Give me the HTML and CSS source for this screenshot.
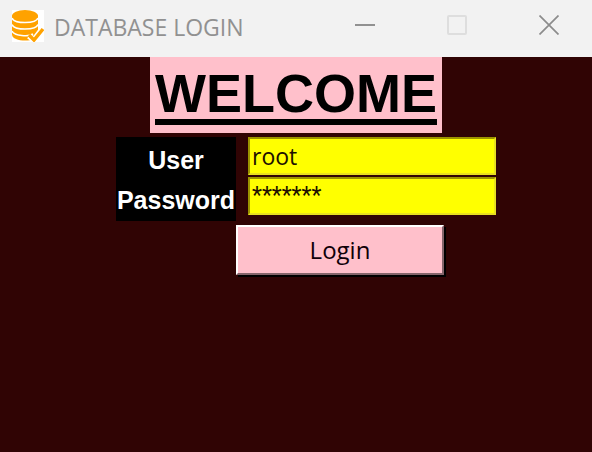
FILE: index.html
```html
<!DOCTYPE html>
<html lang="en">
<head>
<meta charset="utf-8">
<title>DATABASE LOGIN</title>
<link rel="stylesheet" href="styles.css">
</head>
<body>
<header class="titlebar">
  <svg class="app-icon" viewBox="0 0 32 32" aria-hidden="true">
    <rect width="32" height="32" fill="#fff"/>
    <path d="M0 5.500v19c0 8 26 8 26 0v-19z" fill="#ffa200"/>
    <ellipse cx="13" cy="6" rx="13" ry="6" fill="#ffa200"/>
    <path d="M0 8c2 6 24 6 26 0M0 14.500c2 6 24 6 26 0M0 21c2 5 17 6 21 3" fill="none" stroke="#fff" stroke-width="1.600"/>
    <path d="M17 26l5 4 9-12" fill="none" stroke="#fff" stroke-width="6"/>
    <path d="M17 25l5 5 9-11" fill="none" stroke="#ffa200" stroke-width="3.500"/>
  </svg>
  <span class="title">DATABASE LOGIN</span>
  <div class="controls">
    <button type="button" aria-label="Minimize"><svg viewBox="0 0 20 20"><path d="M0 10h20" stroke="#919191" stroke-width="2"/></svg></button>
    <button type="button" aria-label="Maximize" disabled><svg viewBox="0 0 20 20"><rect x="1" y="1" width="18" height="18" rx="1" fill="none" stroke="#dedede" stroke-width="2"/></svg></button>
    <button type="button" aria-label="Close"><svg viewBox="0 0 20 20"><path d="M0.5 0.5l19 19M19.5 0.5l-19 19" stroke="#8c8c8c" stroke-width="1.7"/></svg></button>
  </div>
</header>
<main>
  <h1>WELCOME</h1>
  <form>
    <div class="fields">
      <div class="labels">
        <label for="user">User</label>
        <label for="password">Password</label>
      </div>
      <div class="inputs">
        <input id="user" type="text" value="root">
        <input id="password" class="masked" type="text" value="*******" autocomplete="off">
      </div>
    </div>
    <button class="login" type="button">Login</button>
  </form>
</main>
</body>
</html>
```
FILE: styles.css
```css
* { box-sizing: border-box; }
body {
  margin: 0;
  min-height: 100vh;
  display: flex;
  flex-direction: column;
  background: #300404;
  font-family: "Open Sans", sans-serif;
}
.titlebar {
  display: flex;
  align-items: center;
  height: 57px;
  padding: 0 0 7px 12px;
  background: #f2f2f2;
}
.app-icon { width: 32px; height: 32px; margin-top: 2px; }
.title {
  margin-left: 10px;
  padding-top: 4px;
  font-size: 23px;
  line-height: 32px;
  color: #919191;
  white-space: nowrap;
}
.controls { display: flex; margin: 0 -3px 0 auto; }
.controls button {
  display: grid;
  place-items: center;
  width: 92px;
  height: 50px;
  padding: 0;
  border: 0;
  background: none;
}
.controls svg { width: 20px; height: 20px; }
body { overflow-x: hidden; }
main { display: flex; flex-direction: column; align-items: center; }
h1 {
  margin: 0;
  padding: 0 5px 4px;
  background: #ffc0cb;
  color: #000;
  font: bold 54px/72px "Liberation Sans", sans-serif;
  text-decoration: underline;
  text-decoration-thickness: 6px;
  text-underline-offset: 7px;
}
form { display: flex; flex-direction: column; align-items: center; padding-top: 4px; }
.fields { display: flex; gap: 12px; margin-left: 20px; }
.labels {
  display: flex;
  flex-direction: column;
  width: 120px;
  height: 84px;
  padding-top: 3px;
  background: #000;
  color: #fff;
  text-align: center;
  font: bold 25px/40px "Liberation Sans", sans-serif;
}
.inputs { display: flex; flex-direction: column; gap: 2px; width: 248px; }
input {
  width: 100%;
  height: 38px;
  padding: 0 2px;
  border: 2px solid;
  border-color: #9c9400 #e8e020 #e8e020 #9c9400;
  border-radius: 0;
  background: #ff0;
  color: #201000;
  font: 23px/32px "Open Sans", sans-serif;
}
.masked { padding-bottom: 2px; font-family: Roboto, sans-serif; }
.login {
  width: 208px;
  height: 50px;
  margin: 4px 0 0 88px;
  padding: 0;
  border: 2px solid;
  border-color: #fff #85656b #85656b #fff;
  border-radius: 0;
  box-shadow: 2px 2px 0 #000;
  background: #ffc0cb;
  color: #100008;
  font: 24px/46px "Open Sans", sans-serif;
}
```
